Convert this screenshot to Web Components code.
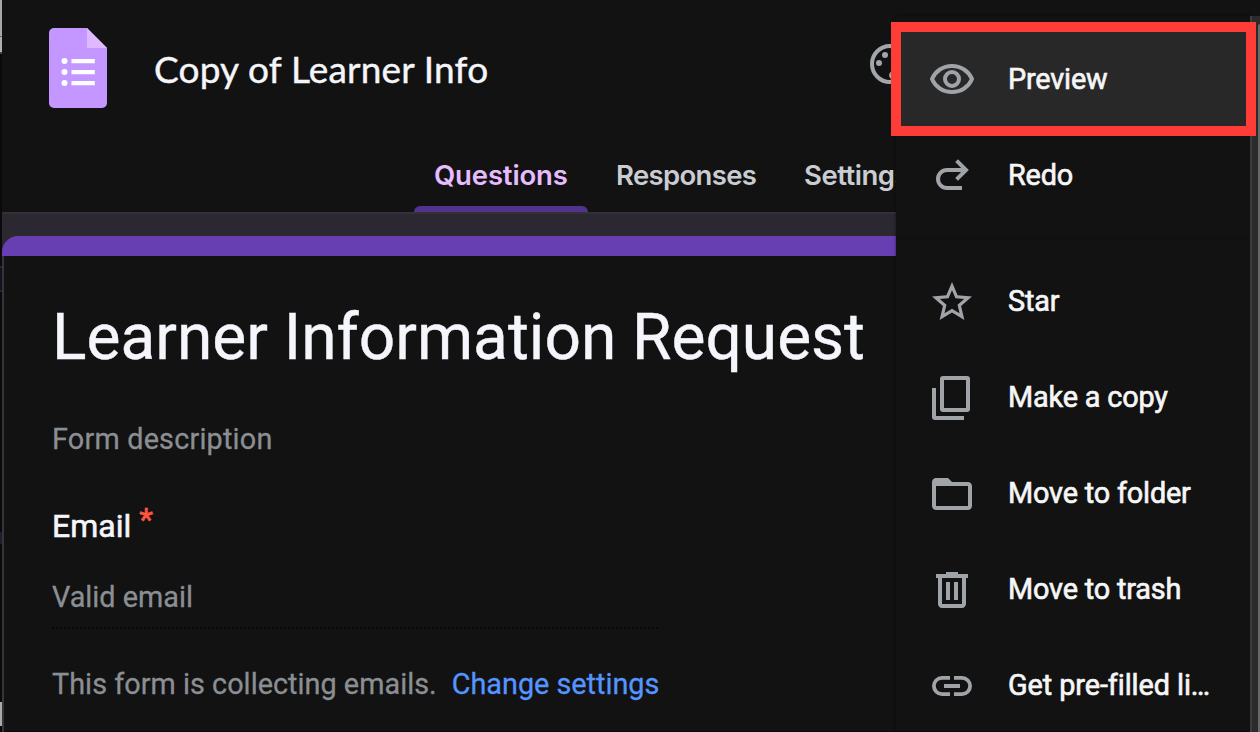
<!DOCTYPE html>
<html lang="en"><head><meta charset="utf-8"><title>Copy of Learner Info</title>
<style>html,body{margin:0;background:#121212;overflow:hidden}</style></head><body>
<forms-app></forms-app>
<script>
const define=(name,html)=>customElements.define(name,class extends HTMLElement{
 constructor(){super();this.attachShadow({mode:'open'}).innerHTML=html;}
});

const ICONS={
 eye:'<g fill="none" stroke="currentColor" stroke-width="2"><path d="M2 12C3.700 8 7.500 5.500 12 5.500S20.300 8 22 12C20.300 16 16.500 18.500 12 18.500S3.700 16 2 12Z"/><circle cx="12" cy="12" r="3.500"/></g>',
 redo:'<path fill="none" stroke="currentColor" stroke-width="2" d="M17 18H9.500A4.500 4.500 0 0 1 9.500 9H19M14.300 4.300L19 9L14.300 13.700"/>',
 star:'<path d="M22 9.240l-7.190-.62L12 2 9.190 8.630 2 9.240l5.460 4.730L5.820 21 12 17.270 18.180 21l-1.630-7.030L22 9.240zM12 15.400l-3.760 2.270 1-4.280-3.320-2.880 4.380-.38L12 6.100l1.710 4.040 4.380.38-3.320 2.880 1 4.280L12 15.400z"/>',
 copy:'<path d="M2 7h2v14h14v2H3.500A1.500 1.500 0 0 1 2 21.500z"/><path fill-rule="evenodd" d="M7.500 1h12A1.500 1.500 0 0 1 21 2.500v15a1.500 1.500 0 0 1-1.500 1.500h-12A1.500 1.500 0 0 1 6 17.500v-15A1.500 1.500 0 0 1 7.500 1zM8 3v14h11V3z"/>',
 folder:'<path d="M10 4H4c-1.100 0-2 .9-2 2v12c0 1.100.9 2 2 2h16c1.100 0 2-.9 2-2V8c0-1.100-.9-2-2-2h-8zm10 14H4V8h16z"/>',
 trash:'<path d="M15 4V3H9v1H4v2h1v13c0 1.100.9 2 2 2h10c1.100 0 2-.9 2-2V6h1V4zm2 15H7V6h10zM9 8h2v9H9zm4 0h2v9h-2z"/>',
 link:'<path d="M3.900 12c0-1.710 1.390-3.100 3.100-3.100h4V7H7a5 5 0 0 0 0 10h4v-1.900H7A3.100 3.100 0 0 1 3.900 12zM8 13h8v-2H8zm9-6h-4v1.900h4a3.100 3.100 0 0 1 0 6.200h-4V17h4a5 5 0 0 0 0-10z"/>'
};

define('form-logo',`<style>:host{display:block;width:58px;height:80px}svg{display:block}</style>
<svg width="58" height="80"><path fill="#c496ff" d="M5 0H38L58 20V75a5 5 0 0 1-5 5H5a5 5 0 0 1-5-5V5a5 5 0 0 1 5-5z"/><path fill="#e0b8ff" d="M38 0L58 20H38z"/><g fill="#fff"><circle cx="15.500" cy="33" r="3"/><circle cx="15.500" cy="44" r="3"/><circle cx="15.500" cy="55" r="3"/><path d="M22.500 31h23.300v4.300H22.500zM22.500 42h23.300v4.300H22.500zM22.500 53h23.300v4.300H22.500z"/></g></svg>`);

define('palette-icon',`<style>:host{display:block;width:40px;height:40px;color:#a2a5aa}svg{display:block}</style>
<svg width="40" height="40"><path fill="none" stroke="currentColor" stroke-width="4" d="M20 2a18 18 0 0 0 0 36c3 0 4-3 2-5s0-5 3-5h5c5 0 8-4 8-8C38 9 30 2 20 2z"/><g fill="currentColor"><circle cx="9" cy="19" r="3"/><circle cx="15" cy="11" r="3"/><circle cx="25" cy="11" r="3"/><circle cx="31" cy="19" r="3"/></g></svg>`);

define('tab-item',`<style>:host{display:block;box-sizing:border-box;height:72px;padding:0 20px;position:relative;font:600 27.500px/70px Inter,"Liberation Sans",sans-serif;color:#c9cdd1;white-space:nowrap}
:host([active]){color:#e7bcff}i{display:none}:host([active]) i{display:block;position:absolute;left:0;right:0;bottom:0;height:6px;border-radius:6px 6px 0 0;background:#51328c}</style><slot></slot><i></i>`);

define('top-bar',`<style>:host{display:block;height:212px;border-bottom:2px solid #323135;overflow:hidden}
.row{display:flex;align-items:flex-start;height:140px;box-sizing:border-box;padding:28px 0 0 47px}
h1{margin:0 0 0 47px;width:716px;font:400 37px/82px Lato,"Liberation Sans",sans-serif;color:#f5f6fa;white-space:nowrap}
h1 span{letter-spacing:.18px;-webkit-text-stroke:.4px #f5f6fa}palette-icon{margin-top:16px}
nav{display:flex;margin-left:412px;gap:8px;white-space:nowrap}
.q{width:174px;letter-spacing:-.15px}.r{width:180px;letter-spacing:-.65px}.s{letter-spacing:-.5px}</style>
<div class="row"><form-logo></form-logo><h1><span>Copy of Learner Info</span></h1><palette-icon></palette-icon></div>
<nav><tab-item class="q" active>Questions</tab-item><tab-item class="r">Responses</tab-item><tab-item class="s">Settings</tab-item></nav>`);

define('form-card',`<style>:host{display:block;color:#8b8f94;font:400 28.800px/40px Roboto,"Liberation Sans",sans-serif;white-space:nowrap;overflow:hidden}
.stripe{height:20px;background:#673fb2;border-radius:16px 0 0 0}.body{height:476px;border-left:2px solid #35343a;padding-left:48px;background:#121212}
h2{margin:0;padding-top:37px;font:400 64px/90px Roboto,sans-serif;color:#f5f6fb;-webkit-text-stroke:.4px currentColor}
.desc,.valid,.note{-webkit-text-stroke:.3px currentColor}
.desc{margin-top:36px;letter-spacing:.2px}.email{margin-top:47px;color:#f5f6fb;font-size:32px;display:flex;gap:8px;-webkit-text-stroke:.6px currentColor}.email sup{color:#ff5540;font:400 32px/40px Roboto,sans-serif;margin-top:-7px}
.valid{margin-top:31px;height:52px;box-sizing:border-box;width:606px;border-bottom:2px dotted #080808}
.note{margin-top:35px;display:flex;gap:15px}.note span{letter-spacing:.03px}.note a{color:#5595ff}</style>
<div class="stripe"></div><div class="body"><h2><span>Learner Information Request</span></h2><div class="desc"><span>Form description</span></div><div class="email"><span>Email</span><sup>*</sup></div><div class="valid"><span>Valid email</span></div><div class="note"><span>This form is collecting emails.</span><a>Change settings</a></div></div>`);

customElements.define('menu-item',class extends HTMLElement{constructor(){super();this.attachShadow({mode:'open'}).innerHTML=`<style>:host{display:flex;align-items:center;height:96px;padding-left:32px;gap:32px;color:#f6f6f6;font:400 28.800px/40px Roboto,"Liberation Sans",sans-serif;letter-spacing:-.16px;white-space:nowrap;-webkit-text-stroke:.65px currentColor}svg{width:48px;height:48px;margin-top:2px;color:#a0a3a8;fill:currentColor;flex:none;-webkit-text-stroke:0}:host([hover]){background:#282828}:host([hover]) svg{margin-top:0}</style><svg viewBox="0 0 24 24">${ICONS[this.getAttribute('icon')]}</svg><slot></slot>`}});

define('overflow-menu',`<style>:host{display:block;position:absolute;left:896px;top:16px;width:354px;height:716px;background:#121212;box-sizing:border-box;padding-top:15px;overflow:hidden;box-shadow:0 0 3px #0008}hr{height:2px;border:0;margin:14px 0;background:#101010}</style>
<menu-item icon="eye" hover>Preview</menu-item><menu-item icon="redo">Redo</menu-item><hr><menu-item icon="star">Star</menu-item><menu-item icon="copy">Make a copy</menu-item><menu-item icon="folder">Move to folder</menu-item><menu-item icon="trash">Move to trash</menu-item><menu-item icon="link" style="letter-spacing:-.07px">Get pre-filled li…</menu-item>`);

define('scroll-track',`<style>:host{display:block;position:absolute;left:1250px;top:16px;width:10px;height:716px;box-sizing:border-box;background:#2b2b2b;border-left:2px solid #3c3c3c}i{display:block;height:708px;margin:8px 0 0 6px;background:#686868;border-radius:2px 0 0 0}</style><i></i>`);
define('highlight-box',`<style>:host{display:block;position:absolute;left:891px;top:22px;width:365px;height:114px;box-sizing:border-box;border:solid #ff3d38;border-width:10px}</style>`);

define('window-edge',`<style>:host{display:flex;flex-direction:column;width:2px;height:732px;background:#0a0a0a}i{display:block}</style>
<i style="height:36px;background:#a8a8a8"></i><i style="height:1px;background:#666"></i><i style="height:15px;background:#b0b0b0"></i><i style="height:2px;background:#444"></i><i style="height:212px"></i><i style="height:2px;background:#242428"></i><i style="height:22px;background:#14121c"></i><i style="height:2px;background:#242428"></i><i style="height:240px"></i><i style="height:12px;background:#201e29"></i><i style="height:158px"></i><i style="height:24px;background:#aaa"></i>`);

define('forms-app',`<style>:host{display:flex;position:relative;width:1260px;height:732px;background:#121212;overflow:hidden}main{flex:1;display:flex;flex-direction:column;min-width:0}.canvas{flex:1;background:#2b2831;padding-top:22px}.bottom{position:absolute;left:4px;right:10px;bottom:0;height:1px;background:#0c080c}</style>
<window-edge></window-edge><main><top-bar></top-bar><div class="canvas"><form-card></form-card></div></main><overflow-menu></overflow-menu><scroll-track></scroll-track><highlight-box></highlight-box><div class="bottom"></div>`);
</script></body></html>
